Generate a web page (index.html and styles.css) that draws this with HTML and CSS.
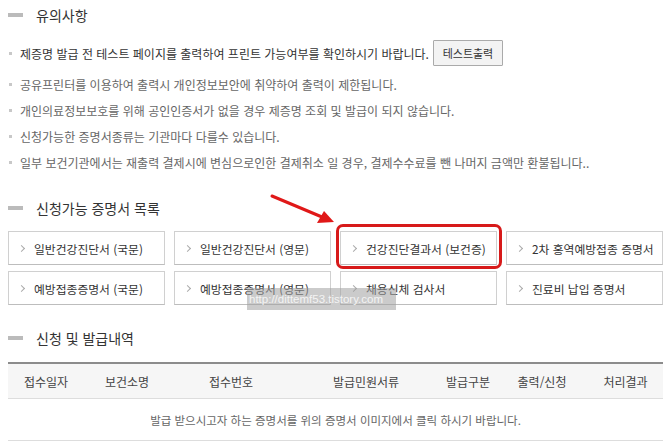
FILE: index.html
```html
<!DOCTYPE html>
<html lang="ko">
<head>
  <meta charset="UTF-8">
  <title>증명서 발급</title>
  <link rel="stylesheet" href="styles.css">
</head>
<body>

  <h2 class="title first">유의사항</h2>
  <ul class="notice">
    <li class="strong">제증명 발급 전 테스트 페이지를 출력하여 프린트 가능여부를 확인하시기 바랍니다. <button class="test-btn" type="button">테스트출력</button></li>
    <li>공유프린터를 이용하여 출력시 개인정보보안에 취약하여 출력이 제한됩니다.</li>
    <li>개인의료정보보호를 위해 공인인증서가 없을 경우 제증명 조회 및 발급이 되지 않습니다.</li>
    <li>신청가능한 증명서종류는 기관마다 다를수 있습니다.</li>
    <li>일부 보건기관에서는 재출력 결제시에 변심으로인한 결제취소 일 경우, 결제수수료를 뺀 나머지 금액만 환불됩니다..</li>
  </ul>

  <h2 class="title">신청가능 증명서 목록</h2>
  <div class="cert-list">
    <a class="cert" href="#">일반건강진단서 (국문)</a>
    <a class="cert" href="#">일반건강진단서 (영문)</a>
    <a class="cert marked" href="#">건강진단결과서 (보건증)</a>
    <a class="cert" href="#">2차 홍역예방접종 증명서</a>
    <a class="cert" href="#">예방접종증명서 (국문)</a>
    <a class="cert" href="#">예방접종증명서 (영문)</a>
    <a class="cert" href="#">채용신체 검사서</a>
    <a class="cert" href="#">진료비 납입 증명서</a>
  </div>

  <h2 class="title">신청 및 발급내역</h2>
  <table class="history">
    <thead>
      <tr>
        <th class="c1">접수일자</th>
        <th class="c2">보건소명</th>
        <th class="c3">접수번호</th>
        <th class="c4">발급민원서류</th>
        <th class="c5">발급구분</th>
        <th class="c6">출력/신청</th>
        <th class="c7">처리결과</th>
      </tr>
    </thead>
    <tbody>
      <tr>
        <td colspan="7">발급 받으시고자 하는 증명서를 위의 증명서 이미지에서 클릭 하시기 바랍니다.</td>
      </tr>
    </tbody>
  </table>

  <!-- annotation arrow -->
  <svg class="arrow" width="80" height="40" viewBox="0 0 80 40">
    <line x1="2" y1="3" x2="52" y2="24" stroke="#e01818" stroke-width="3" stroke-linecap="round"/>
    <polygon points="64,29 47,30 54,18" fill="#e01818"/>
  </svg>

  <div class="watermark">http://dittemf53.tistory.com</div>

</body>
</html>
```

FILE: styles.css
```css
body {
  margin: 0;
  padding: 0 7px 0 8px;
  font-family: "Noto Sans CJK KR", "Noto Sans", sans-serif;
  color: #555;
  background: #fff;
  position: relative;
}
.title {
  display: flex;
  align-items: center;
  height: 20px;
  margin: 23px 0 13px;
  font-size: 14px;
  font-weight: normal;
  color: #333;
}
.title::before {
  content: "";
  width: 15px;
  height: 4px;
  background: #bbb;
  margin-right: 13px;
}
.title.first {
  margin-top: 5px;
  margin-bottom: 15px;
}
.notice {
  list-style: none;
  margin: 0;
  padding: 0;
}
.notice li {
  display: flex;
  align-items: center;
  height: 26px;
  font-size: 12px;
  color: #666;
  padding-left: 12px;
  position: relative;
}
.notice li::before {
  content: "";
  position: absolute;
  left: 1px;
  top: 12px;
  width: 3px;
  height: 3px;
  background: #c8c8c8;
}
.notice li.strong {
  color: #333;
  margin-bottom: 5px;
}
.test-btn {
  height: 26px;
  width: 70px;
  margin-left: 4px;
  padding: 0;
  font-family: inherit;
  font-size: 11px;
  color: #333;
  background: #f3f3f3;
  border: 1px solid #aaa;
  border-radius: 1px;
}
.cert-list {
  display: grid;
  grid-template-columns: repeat(4, 157px);
  column-gap: 9px;
  row-gap: 6px;
}
.cert {
  display: flex;
  align-items: center;
  height: 32px;
  padding-left: 25px;
  position: relative;
  font-size: 11.8px;
  color: #333;
  text-decoration: none;
  border: 1px solid #d0d0d0;
  border-bottom-color: #bdbdbd;
  background: #fff;
}
.cert::before {
  content: "";
  position: absolute;
  left: 10px;
  top: 14px;
  width: 4px;
  height: 4px;
  border-top: 1px solid #aaa;
  border-right: 1px solid #aaa;
  transform: rotate(45deg);
}
.cert.marked::after {
  content: "";
  position: absolute;
  top: -8px;
  bottom: -5px;
  left: -5px;
  right: -6px;
  border: 3px solid #d71a1a;
  border-radius: 7px;
}
.history {
  width: 655px;
  border-collapse: collapse;
  table-layout: fixed;
  font-size: 12px;
  margin-top: 14px;
}
.history th,
.history td {
  padding: 0;
}
.history th {
  height: 34px;
  font-weight: normal;
  color: #444;
  background: #f6f6f6;
  border-top: 2px solid #8c8c8c;
  border-bottom: 1px solid #ddd;
}
.history td {
  height: 41px;
  text-align: center;
  font-size: 11.5px;
  color: #666;
  border-bottom: 1px solid #ddd;
}
.c1 { width: 76px; }
.c2 { width: 86px; }
.c3 { width: 122px; }
.c4 { width: 148px; }
.c5 { width: 56px; }
.c6 { width: 92px; }
.c7 { width: 75px; }
.arrow {
  position: absolute;
  left: 270px;
  top: 193px;
}
.watermark {
  position: absolute;
  left: 247px;
  top: 288px;
  width: 147px;
  height: 22px;
  line-height: 22px;
  padding-left: 2px;
  font-family: "Liberation Sans", sans-serif;
  font-size: 11.5px;
  color: #f4f4f4;
  background: rgba(160, 160, 160, 0.55);
  overflow: hidden;
  white-space: nowrap;
}
```
